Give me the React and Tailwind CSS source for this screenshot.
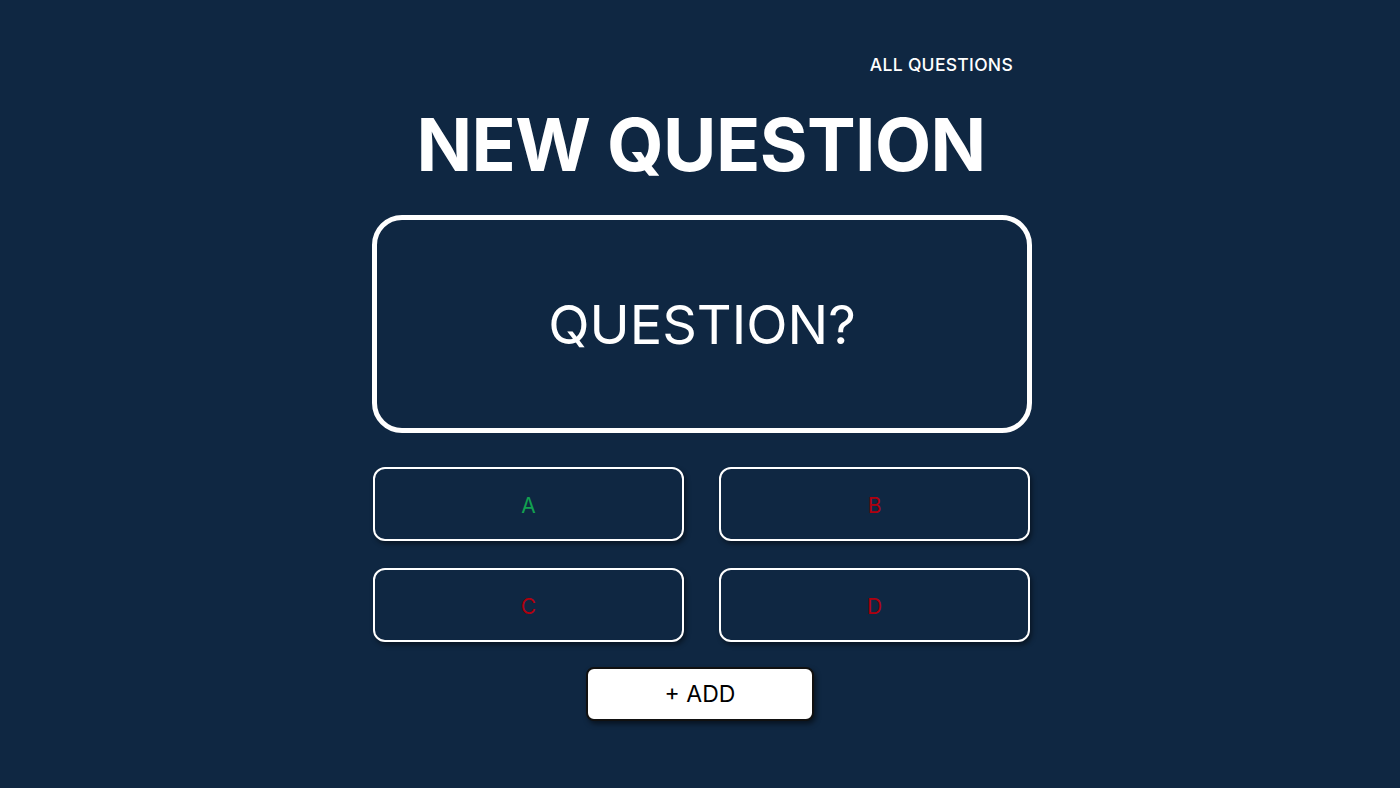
import { useState } from "react";

const answers = [
  { key: "A", color: "text-[#12a150]" },
  { key: "B", color: "text-[#b0000e]" },
  { key: "C", color: "text-[#b0000e]" },
  { key: "D", color: "text-[#b0000e]" },
];

const AnswerBox = ({ label, color }) => (
  <button className="h-[74px] rounded-[12px] border-2 border-white bg-[#0f2742] shadow-[2px_3px_5px_rgba(0,0,0,0.45)] flex items-center justify-center">
    <span className={`text-[21px] pt-[3px] ${color}`}>{label}</span>
  </button>
);

export default function App() {
  const [question] = useState("QUESTION?");

  return (
    <div
      className="min-h-[788px] w-full bg-[#0f2742] flex flex-col items-center"
      style={{ fontFamily: "Inter, 'Liberation Sans', Arial, sans-serif" }}
    >
      {/* top link */}
      <div className="w-[660px] flex justify-end pt-[54px] pr-[17px]">
        <a className="text-[17.5px] font-medium text-white leading-[22px] tracking-[0.3px]">
          ALL QUESTIONS
        </a>
      </div>

      {/* title */}
      <h1 className="mt-[27px] ml-[2px] text-[73px] font-bold text-white leading-[84px] tracking-[-0.6px]">
        NEW QUESTION
      </h1>

      {/* question card */}
      <div className="mt-[28px] ml-[4px] w-[660px] h-[218px] rounded-[30px] border-[5px] border-white flex items-center justify-center">
        <span className="text-[54px] text-white font-normal">{question}</span>
      </div>

      {/* answers */}
      <div className="mt-[34px] ml-[3px] w-[657px] grid grid-cols-2 gap-x-[35px] gap-y-[27px]">
        {answers.map((a) => (
          <AnswerBox key={a.key} label={a.key} color={a.color} />
        ))}
      </div>

      {/* add */}
      <button className="mt-[25px] w-[228px] h-[54px] rounded-[8px] bg-white border-2 border-[#111] shadow-[2px_3px_5px_rgba(0,0,0,0.5)] flex items-center justify-center">
        <span className="text-[23px] text-black">+ ADD</span>
      </button>
    </div>
  );
}
